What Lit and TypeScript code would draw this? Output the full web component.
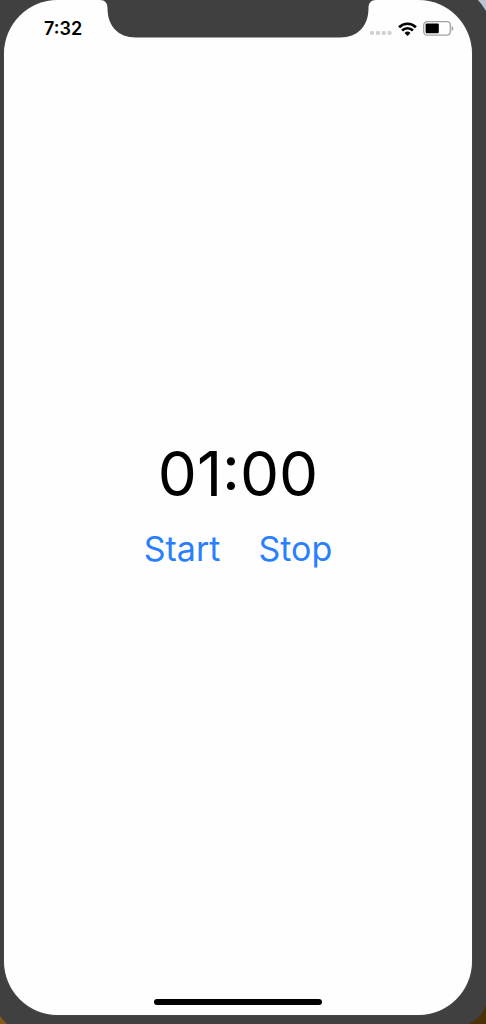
import { LitElement, html, css } from "lit";
import { customElement, state } from "lit/decorators.js";

@customElement("status-bar")
class StatusBar extends LitElement {
  static styles = css`
    :host {
      display: flex;
      align-items: center;
      justify-content: space-between;
      height: 57px;
      padding: 0 18px 0 40px;
      color: #000;
    }
    .clock {
      font-size: 18px;
      line-height: 24px;
      font-weight: 600;
    }
    .icons {
      display: flex;
      align-items: center;
      gap: 6px;
    }
    svg {
      display: block;
    }
    .dots {
      margin-top: 9px;
    }
  `;

  render() {
    return html`
      <time class="clock">7:32</time>
      <div class="icons">
        <svg class="dots" width="22" height="4" viewBox="0 0 22 4" fill="#d0d0d0" aria-hidden="true">
          <rect x="0" y="0" width="4" height="4" rx="1.4" />
          <rect x="5.9" y="0" width="4" height="4" rx="1.4" />
          <rect x="11.8" y="0" width="4" height="4" rx="1.4" />
          <rect x="17.6" y="0" width="4" height="4" rx="1.4" />
        </svg>
        <svg width="19" height="14" viewBox="0 0 19 14" aria-hidden="true">
          <g fill="none" stroke="#000" stroke-width="2.7">
            <path d="M1.1 5.2 A12 12 0 0 1 17.9 5.2" />
            <path d="M4.1 8.5 A7.6 7.6 0 0 1 14.900 8.5" />
          </g>
          <path d="M6.5 11 A4.3 4.3 0 0 1 12.5 11 L9.5 14 Z" fill="#000" />
        </svg>
        <svg width="31" height="15" viewBox="0 0 31 15" aria-hidden="true">
          <rect x="0.7" y="0.7" width="26.6" height="13.4" rx="3.4" fill="none" stroke="#a3a3a3" stroke-width="1.3" />
          <rect x="2.6" y="2.6" width="13.2" height="9.6" rx="1.2" fill="#000" />
          <path d="M28.6 5 C31 5.7 31 9.2 28.6 9.9 Z" fill="#a3a3a3" />
        </svg>
      </div>
    `;
  }
}

@customElement("app-root")
class AppRoot extends LitElement {
  static styles = css`
    :host {
      display: block;
      font-family: Inter, "Liberation Sans", sans-serif;
    }
    .device {
      position: relative;
      box-sizing: border-box;
      display: flex;
      min-height: 100vh;
      padding: 0 14px 9px 4px;
      background: #404040;
      overflow: hidden;
    }
    .screen {
      flex: 1;
      display: flex;
      flex-direction: column;
      background: #fefefe;
      border-radius: 54px;
      box-shadow: 0 0 1px #888;
    }
    .notch {
      position: absolute;
      top: 0;
      left: calc(50% - 5px);
      transform: translateX(-50%);
    }
    .corner {
      position: absolute;
    }
    .top-right {
      top: 0;
      right: 0;
    }
    .bottom-right {
      bottom: 0;
      right: 0;
    }
    .bottom-left {
      bottom: 0;
      left: 0;
    }
    .timer {
      flex: 1;
      display: flex;
      flex-direction: column;
      align-items: center;
      justify-content: center;
      gap: 16px;
      padding-bottom: 48px;
    }
    .remaining {
      font-size: 62px;
      line-height: 74px;
      color: #000;
    }
    .actions {
      display: flex;
      gap: 38px;
    }
    .action {
      padding: 0;
      border: 0;
      background: none;
      font: inherit;
      font-size: 34px;
      line-height: 44px;
      color: #2a7fff;
      cursor: pointer;
    }
    .home {
      align-self: center;
      width: 36%;
      height: 6px;
      margin-bottom: 10px;
      border-radius: 3px;
      background: #000;
    }
  `;

  @state() private seconds = 60;
  private ticker = 0;

  private start = () => {
    this.stop();
    this.ticker = window.setInterval(() => {
      this.seconds = Math.max(0, this.seconds - 1);
      if (this.seconds === 0) this.stop();
    }, 1000);
  };

  private stop = () => window.clearInterval(this.ticker);

  disconnectedCallback() {
    super.disconnectedCallback();
    this.stop();
  }

  render() {
    const two = (n: number) => String(n).padStart(2, "0");
    const label = `${two(Math.floor(this.seconds / 60))}:${two(this.seconds % 60)}`;
    return html`
      <div class="device">
        <div class="screen">
          <status-bar></status-bar>
          <main class="timer">
            <div class="remaining" role="timer">${label}</div>
            <div class="actions">
              <button class="action" @click=${this.start}>Start</button>
              <button class="action" @click=${this.stop}>Stop</button>
            </div>
          </main>
          <div class="home"></div>
        </div>
        <svg class="notch" width="276" height="38" viewBox="0 0 276 38" aria-hidden="true">
          <path fill="#404040" d="M0 0 C5 0 7.500 3 7.500 8 C7.500 26 18 37.500 36 37.500 H240 C258 37.500 268.500 26 268.500 8 C268.500 3 271 0 276 0 Z" />
        </svg>
        <svg class="corner top-right" width="8" height="11" viewBox="0 0 8 11" aria-hidden="true">
          <path fill="#bcc3d3" d="M0 0 H8 V11 Q4.500 5 0 0 Z" />
        </svg>
        <svg class="corner bottom-right" width="17" height="18" viewBox="0 0 17 18" aria-hidden="true">
          <path fill="#4a3107" d="M17 0 Q12 12 0 18 H17 Z" />
        </svg>
        <svg class="corner bottom-left" width="7" height="8" viewBox="0 0 7 8" aria-hidden="true">
          <path fill="#875a18" d="M0 0 Q3 4.500 7 8 H0 Z" />
        </svg>
      </div>
    `;
  }
}
